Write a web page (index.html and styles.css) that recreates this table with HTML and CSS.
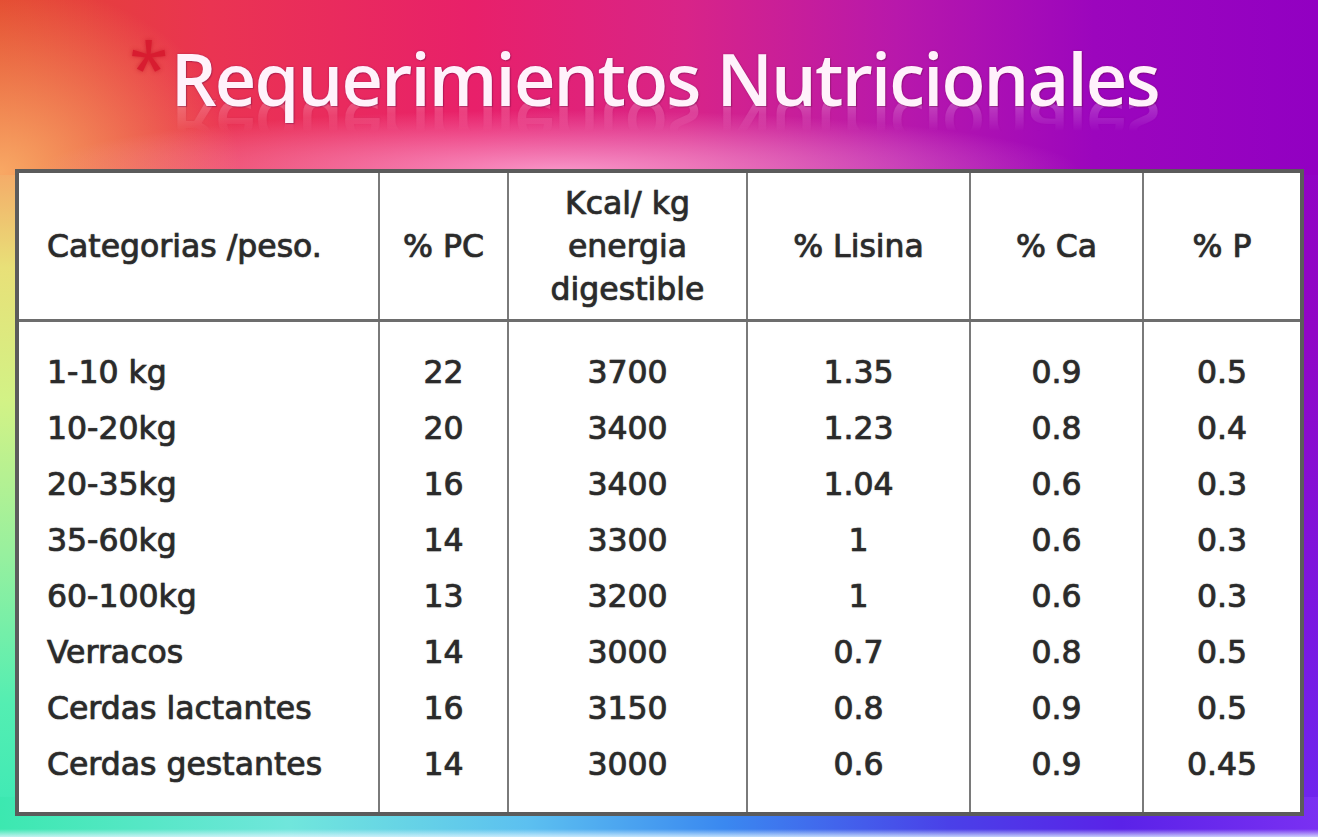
FILE: index.html
```html
<!DOCTYPE html>
<html lang="es">
<head>
<meta charset="utf-8">
<title>Requerimientos Nutricionales</title>
<link rel="stylesheet" href="styles.css">
</head>
<body>
<main class="page">
  <h1 class="title"><span class="star">*</span><span class="title-text">Requerimientos Nutricionales</span></h1>
  <table class="grid">
    <colgroup>
      <col class="c1"><col class="c2"><col class="c3"><col class="c4"><col class="c5"><col class="c6">
    </colgroup>
    <thead>
      <tr>
        <th class="left">Categorias /peso.</th>
        <th>% PC</th>
        <th>Kcal/ kg<br>energia<br>digestible</th>
        <th>% Lisina</th>
        <th>% Ca</th>
        <th>% P</th>
      </tr>
    </thead>
    <tbody>
      <tr class="first"><td class="left">1-10 kg</td><td>22</td><td>3700</td><td>1.35</td><td>0.9</td><td>0.5</td></tr>
      <tr><td class="left">10-20kg</td><td>20</td><td>3400</td><td>1.23</td><td>0.8</td><td>0.4</td></tr>
      <tr><td class="left">20-35kg</td><td>16</td><td>3400</td><td>1.04</td><td>0.6</td><td>0.3</td></tr>
      <tr><td class="left">35-60kg</td><td>14</td><td>3300</td><td>1</td><td>0.6</td><td>0.3</td></tr>
      <tr><td class="left">60-100kg</td><td>13</td><td>3200</td><td>1</td><td>0.6</td><td>0.3</td></tr>
      <tr><td class="left">Verracos</td><td>14</td><td>3000</td><td>0.7</td><td>0.8</td><td>0.5</td></tr>
      <tr><td class="left">Cerdas lactantes</td><td>16</td><td>3150</td><td>0.8</td><td>0.9</td><td>0.5</td></tr>
      <tr class="last"><td class="left">Cerdas gestantes</td><td>14</td><td>3000</td><td>0.6</td><td>0.9</td><td>0.45</td></tr>
    </tbody>
  </table>
</main>
</body>
</html>
```

FILE: styles.css
```css
html, body {
  margin: 0;
  padding: 0;
}

body {
  width: 1318px;
  height: 837px;
  overflow: hidden;
  background:
    /* soft light glow under the title */
    radial-gradient(ellipse 520px 60px at 560px 170px, rgba(255,185,225,0.75), rgba(255,185,225,0)) 0 0 / 100% 175px no-repeat,
    /* top-left warm corner */
    radial-gradient(ellipse 240px 190px at 0 172px, rgba(248,168,100,1), rgba(248,168,100,0)) 0 0 / 100% 175px no-repeat,
    /* title area hue sweep */
    linear-gradient(to right, #e2462e 0%, #ea3452 16%, #e8206a 36%, #d82488 52%, #b818ab 68%, #9c06bd 83%, #9200c2 100%) 0 0 / 100% 175px no-repeat,
    /* pale line at the very bottom */
    linear-gradient(to bottom, rgba(225,245,255,0), rgba(225,245,255,0.8)) 0 100% / 100% 8px no-repeat,
    /* bottom strip */
    linear-gradient(to right, #3ce8b0 0%, #70e6dc 22%, #5cc0f0 40%, #3a88f0 55%, #4a40e8 72%, #5a22e8 85%, #7a30f2 100%) 0 100% / 100% 40px no-repeat,
    /* right edge */
    linear-gradient(to bottom, #9200c2 0%, #9106c6 40%, #7a18e2 75%, #6c28f0 100%) 100% 0 / 40px 100% no-repeat,
    /* left edge */
    linear-gradient(to bottom, #f07a3a 0%, #f5a868 20%, #e8e078 32%, #d2f286 48%, #98f09e 66%, #54eeb2 84%, #3ae8b6 100%) 0 0 / 40px 100% no-repeat,
    #9a40c0;
  font-family: "DejaVu Sans", "Liberation Sans", sans-serif;
}

.page {
  width: 1318px;
  height: 837px;
  padding: 0 0 0 15px;
  box-sizing: border-box;
}

.title {
  margin: 0;
  height: 169px;
  box-sizing: border-box;
  padding: 42px 0 0 114px;
  font-family: "Open Sans", "DejaVu Sans", sans-serif;
  font-weight: 600;
  font-size: 72px;
  line-height: 72px;
  white-space: nowrap;
  color: #fff2fb;
}

.star {
  display: inline-block;
  line-height: 0;
  color: #d81c30;
  font-size: 72px;
  font-weight: 400;
  vertical-align: 12px;
  margin-right: 2px;
  text-shadow: 0 0 4px rgba(200,20,40,0.7);
}

.title-text {
  display: inline-block;
  letter-spacing: -1.8px;
  text-shadow: 0 0 2px rgba(120,20,80,0.5), 1px 1px 1px rgba(90,10,60,0.3);
  -webkit-box-reflect: below -22px linear-gradient(to bottom, rgba(0,0,0,0) 45%, rgba(0,0,0,0.3) 100%);
}

.grid {
  width: 1286px;
  table-layout: fixed;
  border-collapse: collapse;
  border: 4px solid #5b5b5b;
  background: #fff;
  color: #2a2a2a;
  font-size: 31.5px;
  -webkit-text-stroke: 0.7px #2a2a2a;
  text-shadow: 0 0 1.5px rgba(0,0,0,0.45);
}

.c1 { width: 362px; }
.c2 { width: 129px; }
.c3 { width: 239px; }
.c4 { width: 223px; }
.c5 { width: 173px; }
.c6 { width: 159px; }

.grid th,
.grid td {
  border-left: 2px solid #7a7a7a;
  border-right: 2px solid #7a7a7a;
  text-align: center;
  padding: 0;
  white-space: nowrap;
}

.grid th {
  height: 146px;
  font-weight: 400;
  line-height: 43px;
  border-bottom: 3px solid #6d6d6d;
}

.grid td {
  height: 56px;
  line-height: 56px;
  vertical-align: middle;
}

.grid .first td {
  padding-top: 22px;
}

.grid .last td {
  padding-bottom: 20px;
}

.grid .left {
  text-align: left;
  padding-left: 28px;
}
```
